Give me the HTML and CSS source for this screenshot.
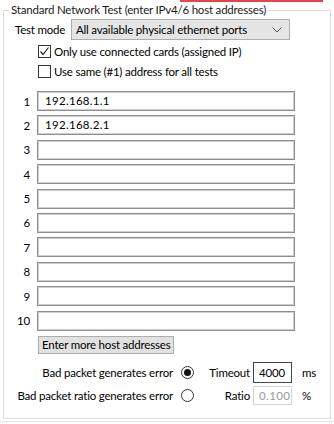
FILE: index.html
```html
<!DOCTYPE html>
<html>
<head>
<meta charset="utf-8">
<link rel="stylesheet" href="styles.css">
</head>
<body>
<div class="redline"></div>
<fieldset class="group">
  <legend class="title">Standard Network Test (enter IPv4/6 host addresses)</legend>
  <div class="mode-row">
    <span class="mode-label">Test mode</span>
    <div class="select">
      <span class="select-text">All available physical ethernet ports</span>
      <svg class="chev" width="10" height="6" viewBox="0 0 10 6"><polyline points="0.5,0.5 5,5 9.5,0.5" fill="none" stroke="#555" stroke-width="1"/></svg>
    </div>
  </div>
  <div class="check-row first">
    <span class="cbox"><svg width="11" height="11" viewBox="0 0 11 11"><polyline points="1.5,5.5 4,8.5 9.5,1.5" fill="none" stroke="#222" stroke-width="1.2"/></svg></span>
    <span class="check-text">Only use connected cards (assigned IP)</span>
  </div>
  <div class="check-row second">
    <span class="cbox"></span>
    <span class="check-text">Use same (#1) address for all tests</span>
  </div>
  <div class="hosts">
    <div class="host"><span class="num">1</span><div class="tbox">192.168.1.1</div></div>
    <div class="host"><span class="num">2</span><div class="tbox">192.168.2.1</div></div>
    <div class="host"><span class="num">3</span><div class="tbox"></div></div>
    <div class="host"><span class="num">4</span><div class="tbox"></div></div>
    <div class="host"><span class="num">5</span><div class="tbox"></div></div>
    <div class="host"><span class="num">6</span><div class="tbox"></div></div>
    <div class="host"><span class="num">7</span><div class="tbox"></div></div>
    <div class="host"><span class="num">8</span><div class="tbox"></div></div>
    <div class="host"><span class="num">9</span><div class="tbox"></div></div>
    <div class="host"><span class="num">10</span><div class="tbox"></div></div>
  </div>
  <div class="btn">Enter more host addresses</div>
  <div class="opts">
    <span class="opt-text">Bad packet generates error</span>
    <span class="radio checked"></span>
    <span class="field-label">Timeout</span>
    <div class="small-box active">4000</div>
    <span class="unit">ms</span>
    <span class="opt-text">Bad packet ratio generates error</span>
    <span class="radio"></span>
    <span class="field-label">Ratio</span>
    <div class="small-box disabled">0.100</div>
    <span class="unit">%</span>
  </div>
</fieldset>
<div class="bottomline"></div>
</body>
</html>
```
FILE: styles.css
```css
html, body {
  margin: 0;
  padding: 0;
  background: #ffffff;
}
body {
  width: 334px;
  height: 424px;
  overflow: hidden;
  font-family: Lato, "Noto Sans", sans-serif;
  font-size: 11.5px;
  letter-spacing: -0.2px;
  color: #000;
  white-space: nowrap;
}
.redline {
  margin-left: 180px;
  width: 143px;
  height: 2px;
  background: #e2474b;
}
.group {
  box-sizing: border-box;
  margin: 0 0 0 3px;
  width: 328px;
  height: 417px;
  padding: 0;
  border: 1px solid #dcdcdc;
  min-width: 0;
}
.title {
  margin-left: 5px;
  padding: 0 2px;
  line-height: 16px;
  height: 16px;
  color: #1a1a1a;
}
.mode-row {
  display: flex;
  align-items: center;
  margin-top: 1px;
  height: 21px;
}
.mode-label {
  margin-left: 11px;
  width: 56px;
}
.select {
  box-sizing: border-box;
  width: 219px;
  height: 21px;
  background: #e5e5e5;
  border: 1px solid #adadad;
  display: flex;
  align-items: center;
  justify-content: space-between;
  padding: 0 5px 0 4px;
}
.chev { margin-right: 2px; }
.check-row {
  display: flex;
  align-items: center;
  height: 13px;
  margin-left: 34px;
}
.check-row.first { margin-top: 5px; }
.check-row.second { margin-top: 7px; }
.cbox {
  box-sizing: border-box;
  width: 13px;
  height: 13px;
  border: 1px solid #333;
  background: #fff;
  display: flex;
  align-items: center;
  justify-content: center;
  flex: none;
}
.check-text { margin-left: 3px; }
.hosts {
  margin-top: 13px;
  display: flex;
  flex-direction: column;
  gap: 4.4px;
}
.host {
  display: flex;
  align-items: center;
  height: 20px;
}
.num {
  width: 26px;
  text-align: right;
  flex: none;
}
.tbox {
  box-sizing: border-box;
  margin-left: 7px;
  width: 258px;
  height: 20px;
  border: 1px solid #8e8e8e;
  box-shadow: inset 0 0 0 1px #cfcfcf;
  background: #fff;
  padding: 0 7px;
  line-height: 18px;
  letter-spacing: 0.3px;
}
.btn {
  box-sizing: border-box;
  margin: 5px 0 0 34px;
  width: 136px;
  height: 18px;
  background: #e1e1e1;
  border: 1px solid #adadad;
  line-height: 16px;
  padding-left: 3px;
}
.opts {
  margin-top: 8px;
  display: grid;
  grid-template-columns: 173px 17px 59px 39px auto;
  grid-template-rows: 21px 19px;
  column-gap: 0;
  row-gap: 3px;
  align-items: center;
}
.opt-text {
  text-align: right;
  padding-right: 4px;
}
.radio {
  box-sizing: border-box;
  width: 13px;
  height: 13px;
  border: 1px solid #333;
  border-radius: 50%;
  margin-left: 4px;
  position: relative;
}
.radio.checked::after {
  content: "";
  position: absolute;
  left: 2px;
  top: 2px;
  width: 7px;
  height: 7px;
  border-radius: 50%;
  background: #111;
}
.field-label {
  text-align: right;
  padding-right: 3px;
}
.small-box {
  box-sizing: border-box;
  width: 39px;
  height: 100%;
  padding-left: 5px;
  display: flex;
  align-items: center;
}
.small-box.active {
  border: 1px solid #444;
}
.small-box.disabled {
  border: 1px solid #d4d4d4;
  color: #9a9a9a;
  letter-spacing: 0.4px;
}
.unit {
  padding-left: 10px;
}
.bottomline {
  margin-top: 2px;
  height: 1px;
  background: #e4e4e4;
}
```
